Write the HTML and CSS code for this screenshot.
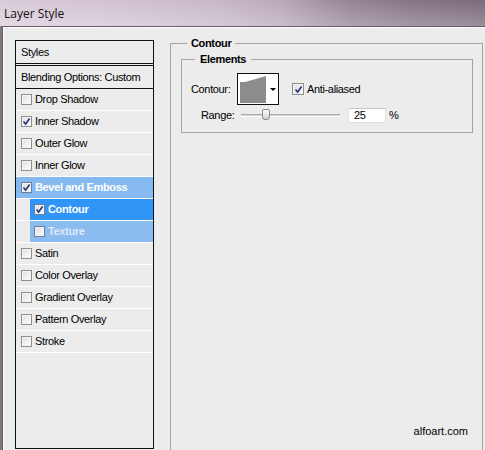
FILE: index.html
```html
<!DOCTYPE html>
<html>
<head>
<meta charset="utf-8">
<link rel="stylesheet" href="styles.css">
</head>
<body>
<div class="window">
  <div class="titlebar"><span class="title">Layer Style</span></div>
  <div class="dialog">
    <div class="styles-panel">
      <div class="panel-head">Styles</div>
      <div class="blend">Blending Options: Custom</div>
      <ul class="fx-list">
        <li class="fx"><span class="cb"></span><span class="fx-name">Drop Shadow</span></li>
        <li class="fx"><span class="cb checked"><svg viewBox="0 0 9 9"><path d="M1.5 4.5 L3.6 7 L7.6 1.5"/></svg></span><span class="fx-name">Inner Shadow</span></li>
        <li class="fx"><span class="cb"></span><span class="fx-name">Outer Glow</span></li>
        <li class="fx"><span class="cb"></span><span class="fx-name">Inner Glow</span></li>
        <li class="fx sel"><span class="cb checked"><svg viewBox="0 0 9 9"><path d="M1.5 4.5 L3.6 7 L7.6 1.5"/></svg></span><span class="fx-name">Bevel and Emboss</span></li>
        <li class="fx sub"><div class="sub-inner active"><span class="cb checked"><svg viewBox="0 0 9 9"><path d="M1.5 4.5 L3.6 7 L7.6 1.5"/></svg></span><span class="fx-name">Contour</span></div></li>
        <li class="fx sub"><div class="sub-inner dim"><span class="cb"></span><span class="fx-name">Texture</span></div></li>
        <li class="fx"><span class="cb"></span><span class="fx-name">Satin</span></li>
        <li class="fx"><span class="cb"></span><span class="fx-name">Color Overlay</span></li>
        <li class="fx"><span class="cb"></span><span class="fx-name">Gradient Overlay</span></li>
        <li class="fx"><span class="cb"></span><span class="fx-name">Pattern Overlay</span></li>
        <li class="fx"><span class="cb"></span><span class="fx-name">Stroke</span></li>
      </ul>
    </div>
    <fieldset class="group outer">
      <legend>Contour</legend>
      <div class="outer-body">
        <fieldset class="group inner">
          <legend>Elements</legend>
          <div class="row contour-row">
            <span class="lbl lbl-contour">Contour:</span>
            <div class="swatch">
              <svg class="curve" viewBox="0 0 29 30" width="29" height="30">
                <polygon points="2,8 7,8 28,2 28,29 2,29" fill="#8c8c8c"/>
              </svg>
              <div class="drop"><span class="arrow"></span></div>
            </div>
            <span class="check"><span class="cb checked"><svg viewBox="0 0 9 9"><path d="M1.5 4.5 L3.6 7 L7.6 1.5"/></svg></span><span class="check-label">Anti-aliased</span></span>
          </div>
          <div class="row range-row">
            <span class="lbl lbl-range">Range:</span>
            <div class="slider"><div class="track"></div><div class="thumb"></div></div>
            <div class="num">25</div>
            <span class="pct">%</span>
          </div>
        </fieldset>
        <div class="credit">alfoart.com</div>
      </div>
    </fieldset>
  </div>
</div>
</body>
</html>
```

FILE: styles.css
```css
* { box-sizing: border-box; }
html, body { margin: 0; padding: 0; }
body {
  width: 485px;
  height: 450px;
  overflow: hidden;
  background: #ececec;
  font-family: "Liberation Sans", Arial, sans-serif;
  font-size: 11px;
  letter-spacing: -0.35px;
  color: #000;
}
.window {
  height: 450px;
  overflow: hidden;
  display: flex;
  flex-direction: column;
  background: #857484;
}
.titlebar {
  height: 26px;
  flex: none;
  display: flex;
  align-items: center;
  padding-left: 4px;
  background:
    linear-gradient(180deg, rgba(255,255,255,0.0) 0%, rgba(255,255,255,0.18) 70%, rgba(255,255,255,0.25) 100%),
    linear-gradient(90deg, #d9cbd9 0%, #d1c2d2 25%, #c7b8c8 45%, #b8a8b8 58%, #958595 72%, #857585 85%, #7a6a7a 100%);
}
.title {
  font-family: "Open Sans", "Liberation Sans", sans-serif;
  font-size: 12px;
  letter-spacing: 0;
  color: #111;
  margin-top: 1px;
}
.dialog {
  flex: 1;
  min-height: 0;
  margin-left: 2px;
  background: #ececec;
  border-top: 1px solid #5f5f62;
  border-left: 1px solid #5f5f62;
  box-shadow: inset 1px 1px 0 #ffffff;
  display: flex;
  align-items: flex-start;
  gap: 16px;
  padding: 9px 0 0 12px;
}
.styles-panel {
  flex: none;
  width: 139px;
  height: 409px;
  margin-top: 4px;
  border: 1px solid #111;
  background: #ececec;
}
.panel-head {
  height: 23px;
  line-height: 22px;
  padding-left: 5px;
  border-bottom: 1px solid #111;
}
.blend {
  height: 24px;
  margin-top: 1px;
  border-top: 1px solid #111;
  border-bottom: 1px solid #111;
  line-height: 22px;
  padding-left: 5px;
}
.fx-list {
  list-style: none;
  margin: 0;
  padding: 0;
}
.fx {
  height: 22px;
  border-bottom: 1px solid #ffffff;
  display: flex;
  align-items: center;
  padding-left: 5px;
  padding-bottom: 1px;
}
.fx-name { margin-left: 3px; }
.fx.sel { background: #86b9ef; }
.fx.sel .fx-name, .sub-inner.active .fx-name { color: #fff; font-weight: bold; }
.fx.sub { padding-left: 14px; padding-bottom: 0; align-items: stretch; }
.sub-inner {
  flex: 1;
  display: flex;
  align-items: center;
  padding-left: 4px;
  padding-bottom: 1px;
}
.sub-inner.active { background: #2f95f6; }
.sub-inner.dim { background: #8bbcf0; }
.sub-inner.dim .fx-name { color: #dbe9f8; font-weight: bold; }
.cb {
  flex: none;
  width: 11px;
  height: 11px;
  border: 1px solid #8e8f8f;
  background: linear-gradient(135deg, #dcdcdc 0%, #f2f2f2 60%, #fbfbfb 100%);
  box-shadow: inset 0 0 0 1px #f4f4f4;
  display: flex;
  align-items: center;
  justify-content: center;
}
.cb svg { width: 9px; height: 9px; }
.cb svg path { fill: none; stroke: #2a3b82; stroke-width: 1.7; }
.sel .cb, .sub-inner .cb { border-color: #6d7d9a; }
.group {
  margin: 0;
  min-width: 0;
  border: 1px solid #a3a3a3;
}
.group legend {
  font-weight: bold;
  line-height: 14px;
  font-size: 11px;
}
.outer {
  flex: none;
  width: 313px;
  height: 414px;
  border-bottom: none;
  padding: 2px 9px 0 10px;
}
.outer legend { margin-left: 6px; padding: 0 4px; }
.outer-body {
  height: 387px;
  display: flex;
  flex-direction: column;
}
.inner {
  width: 292px;
  padding: 7px 8px 9px 9px;
}
.inner legend { margin-left: 4px; padding: 0 5px; }
.row { display: flex; align-items: center; }
.contour-row { height: 32px; }
.lbl-contour { width: 46px; }
.swatch {
  width: 42px;
  height: 32px;
  border: 1px solid #111;
  background: #fff;
  display: flex;
}
.curve { display: block; }
.drop {
  flex: 1;
  display: flex;
  align-items: center;
  justify-content: center;
}
.arrow {
  width: 0;
  height: 0;
  border-left: 3px solid transparent;
  border-right: 3px solid transparent;
  border-top: 3px solid #000;
}
.check { display: flex; align-items: center; margin-left: 13px; }
.check .cb { width: 12px; height: 12px; }
.check-label { margin-left: 3px; }
.range-row { height: 16px; margin-top: 2px; }
.lbl-range { margin-left: 10px; width: 40px; }
.slider { width: 99px; height: 14px; position: relative; display: flex; align-items: center; }
.track {
  width: 100%;
  height: 3px;
  border-top: 1px solid #a8a8a8;
  border-bottom: 1px solid #ffffff;
  background: #d6d6d6;
}
.thumb {
  position: absolute;
  left: 21px;
  top: 1px;
  width: 8px;
  height: 11px;
  border: 1px solid #8a8a8a;
  border-radius: 2px 2px 3px 3px;
  background: linear-gradient(180deg, #fbfbfb 0%, #e6e6e6 55%, #d2d2d2 100%);
}
.num {
  width: 38px;
  height: 15px;
  margin-left: 8px;
  background: #fff;
  border: 1px solid #e2e2e2;
  border-top-color: #c8c8c8;
  padding-left: 5px;
  line-height: 13px;
}
.pct { margin-left: 3px; }
.credit {
  margin-top: auto;
  align-self: flex-end;
  margin-right: 5px;
  margin-bottom: 1px;
  line-height: 14px;
  letter-spacing: 0;
}
```
